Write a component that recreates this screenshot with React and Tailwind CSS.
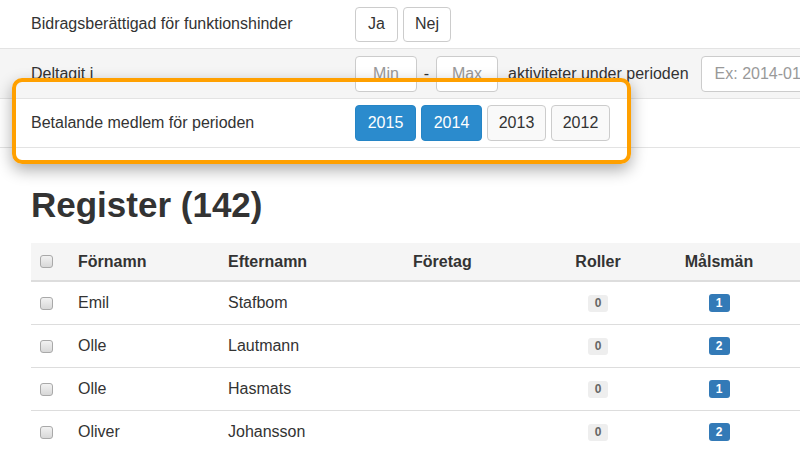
import React from 'react';

const rows = [
  { first: 'Emil', last: 'Stafbom', roles: 0, guardians: 1 },
  { first: 'Olle', last: 'Lautmann', roles: 0, guardians: 2 },
  { first: 'Olle', last: 'Hasmats', roles: 0, guardians: 1 },
  { first: 'Oliver', last: 'Johansson', roles: 0, guardians: 2 },
];

const years = [
  { year: '2015', active: true, w: 'w-[61px]' },
  { year: '2014', active: true, w: 'w-[61px]' },
  { year: '2013', active: false, w: 'w-[59px]' },
  { year: '2012', active: false, w: 'w-[59px]' },
];

const Checkbox = () => (
  <span className="block w-[13px] h-[13px] rounded-[3px] border border-[#a9a9a9] bg-gradient-to-b from-[#f2f2f2] to-[#d8d8d8]" />
);

const cols = 'grid grid-cols-[39px_150px_185px_125px_136px_106px_1fr] items-center';

const App = () => {
  return (
    <div className="relative w-[800px] h-[450px] overflow-hidden bg-white text-[#333] font-['Liberation_Sans',Arial,sans-serif] text-[16px]">
      {/* Filter rows */}
      <div className="flex items-center h-[48px]">
        <div className="w-[355px] pl-[31px]">Bidragsberättigad för funktionshinder</div>
        <div className="flex gap-[5px]">
          <button className="h-[35px] w-[43px] rounded-[4px] border border-[#ccc] bg-white">Ja</button>
          <button className="h-[35px] w-[48px] rounded-[4px] border border-[#ccc] bg-white">Nej</button>
        </div>
      </div>

      <div className="flex items-center h-[50px] border-t border-[#e3e3e3] bg-[#f5f5f5]">
        <div className="w-[355px] shrink-0 pl-[31px]">Deltagit i</div>
        <input placeholder="Min" className="shrink-0 h-[36px] w-[62px] rounded-[4px] border border-[#ccc] bg-white text-center placeholder:text-[#999]" />
        <span className="w-[19px] shrink-0 text-center">-</span>
        <input placeholder="Max" className="shrink-0 h-[36px] w-[62px] rounded-[4px] border border-[#ccc] bg-white text-center placeholder:text-[#999]" />
        <span className="shrink-0 ml-[10px] mr-[12px] whitespace-nowrap">aktiviteter under perioden</span>
        <input placeholder="Ex: 2014-01-01" className="shrink-0 h-[36px] w-[200px] rounded-[4px] border border-[#ccc] bg-white px-[13px] placeholder:text-[#999]" />
      </div>

      <div className="flex items-center h-[50px] border-y border-[#e3e3e3]">
        <div className="w-[355px] pl-[31px]">Betalande medlem för perioden</div>
        <div className="flex gap-[5px]">
          {years.map((y) => (
            <button
              key={y.year}
              className={
                y.active
                  ? `h-[36px] ${y.w} rounded-[4px] border border-[#2585c6] bg-[#2b8bcd] text-white`
                  : `h-[36px] ${y.w} rounded-[4px] border border-[#ccc] bg-[#f9f9f9] text-[#333]`
              }
            >
              {y.year}
            </button>
          ))}
        </div>
      </div>

      {/* Highlight callout */}
      <div className="absolute left-[12px] top-[78px] w-[619px] h-[86px] rounded-[10px] border-4 border-[#ffa000] shadow-[0_6px_16px_rgba(0,0,0,0.33)]" />

      <h1 className="ml-[31px] mt-[38px] mb-[19px] text-[35px] leading-[38px] font-bold">Register (142)</h1>

      {/* Table */}
      <div className="ml-[31px] w-[800px]">
        <div className={`${cols} h-[39px] bg-[#f5f5f5] border-b-2 border-[#ddd] font-bold`}>
          <div className="pl-[9px]"><Checkbox /></div>
          <div className="pl-[8px]">Förnamn</div>
          <div className="pl-[8px]">Efternamn</div>
          <div className="pl-[8px]">Företag</div>
          <div className="text-center">Roller</div>
          <div className="text-center">Målsmän</div>
          <div />
        </div>
        {rows.map((r, i) => (
          <div key={i} className={`${cols} h-[43px] border-b border-[#ddd]`}>
            <div className="pl-[9px]"><Checkbox /></div>
            <div className="pl-[8px]">{r.first}</div>
            <div className="pl-[8px]">{r.last}</div>
            <div />
            <div className="flex justify-center">
              <span className="flex items-center justify-center w-[20px] h-[17px] rounded-[3px] bg-[#eee] text-[12px] font-bold text-[#666]">{r.roles}</span>
            </div>
            <div className="flex justify-center">
              <span className="flex items-center justify-center w-[21px] h-[18px] rounded-[3px] bg-[#337ab7] text-[12px] font-bold text-white">{r.guardians}</span>
            </div>
            <div />
          </div>
        ))}
      </div>
    </div>
  );
};

export default App;
